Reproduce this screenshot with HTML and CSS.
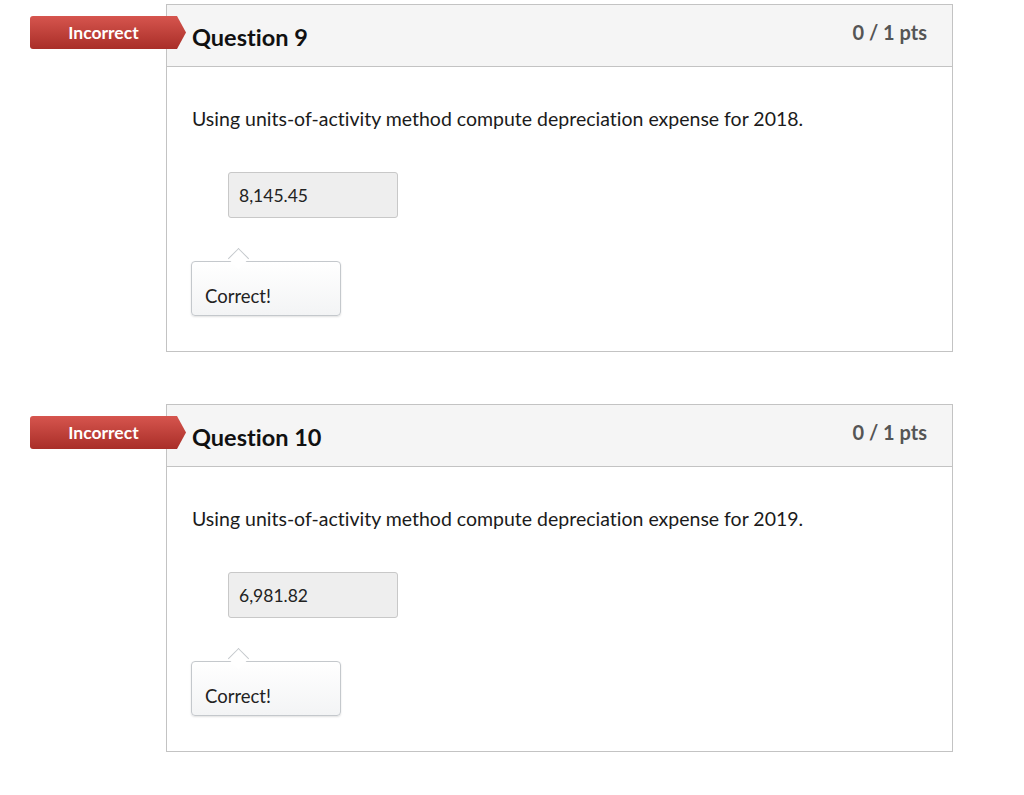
FILE: index.html
```html
<!DOCTYPE html>
<html lang="en">
<head>
<meta charset="utf-8">
<title>Quiz results</title>
<link rel="stylesheet" href="styles.css">
</head>
<body>
<div class="quiz">
  <div class="question">
    <div class="badge">Incorrect</div>
    <div class="q-header">
      <h3 class="q-title">Question 9</h3>
      <div class="q-points">0 / 1 pts</div>
    </div>
    <div class="q-body">
      <p class="q-text">Using units-of-activity method compute depreciation expense for 2018.</p>
      <div class="answer">8,145.45</div>
      <div class="tip">Correct!</div>
    </div>
  </div>
  <div class="question">
    <div class="badge">Incorrect</div>
    <div class="q-header">
      <h3 class="q-title">Question 10</h3>
      <div class="q-points">0 / 1 pts</div>
    </div>
    <div class="q-body">
      <p class="q-text">Using units-of-activity method compute depreciation expense for 2019.</p>
      <div class="answer">6,981.82</div>
      <div class="tip">Correct!</div>
    </div>
  </div>
</div>
</body>
</html>
```
FILE: styles.css
```css
html, body {
  margin: 0;
  padding: 0;
  background: #fff;
}
body {
  font-family: Lato, "Open Sans", sans-serif;
  font-variant-ligatures: none;
  color: #1b1b1b;
}
.quiz {
  padding: 4px 0 0 166px;
  display: flex;
  flex-direction: column;
  gap: 52px;
}
.question {
  position: relative;
  width: 785px;
  border: 1px solid #c3c3c3;
  background: #fff;
}
.badge {
  position: absolute;
  left: -137px;
  top: 11px;
  width: 147px;
  height: 33px;
  padding-right: 9px;
  box-sizing: content-box;
  display: flex;
  align-items: center;
  justify-content: center;
  color: #fff;
  font-weight: 700;
  font-size: 17.5px;
  background: linear-gradient(#d6554e, #a92e28);
  border-radius: 3px 0 0 3px;
  clip-path: polygon(0 0, calc(100% - 9px) 0, 100% 50%, calc(100% - 9px) 100%, 0 100%);
}
.q-header {
  height: 61px;
  background: #f5f5f5;
  border-bottom: 1px solid #c3c3c3;
  display: flex;
  justify-content: space-between;
  align-items: flex-start;
  padding: 0 25px;
}
.q-title {
  margin: 0;
  padding-top: 17px;
  font-size: 23.5px;
  line-height: 30px;
  font-weight: 700;
  color: #111;
}
.q-points {
  padding-top: 15px;
  font-size: 20px;
  line-height: 24px;
  font-weight: 700;
  color: #555;
}
.q-body {
  padding: 40px 25px 35px;
}
.q-text {
  margin: 0;
  font-size: 19.5px;
  line-height: 24px;
  color: #1b1b1b;
}
.answer {
  margin: 41px 0 0 36px;
  width: 158px;
  height: 44px;
  padding-left: 10px;
  border: 1px solid #c8c8c8;
  border-radius: 3px;
  background: #eeeeee;
  display: flex;
  align-items: center;
  font-size: 17.5px;
  color: #222;
}
.tip {
  position: relative;
  margin: 43px 0 0 -1px;
  width: 135px;
  height: 28px;
  padding: 24px 0 1px 13px;
  border: 1px solid #c4c8cc;
  border-radius: 4px;
  background: linear-gradient(#ffffff, #f3f4f5);
  box-shadow: 0 1px 2px rgba(0,0,0,0.12);
  font-size: 18.5px;
  line-height: 20px;
  color: #222;
}
.tip::before {
  content: "";
  position: absolute;
  left: 39px;
  top: -11px;
  width: 14px;
  height: 14px;
  background: #fff;
  border-left: 1px solid #c4c8cc;
  border-top: 1px solid #c4c8cc;
  transform: rotate(45deg);
  transform-origin: center;
}
```
